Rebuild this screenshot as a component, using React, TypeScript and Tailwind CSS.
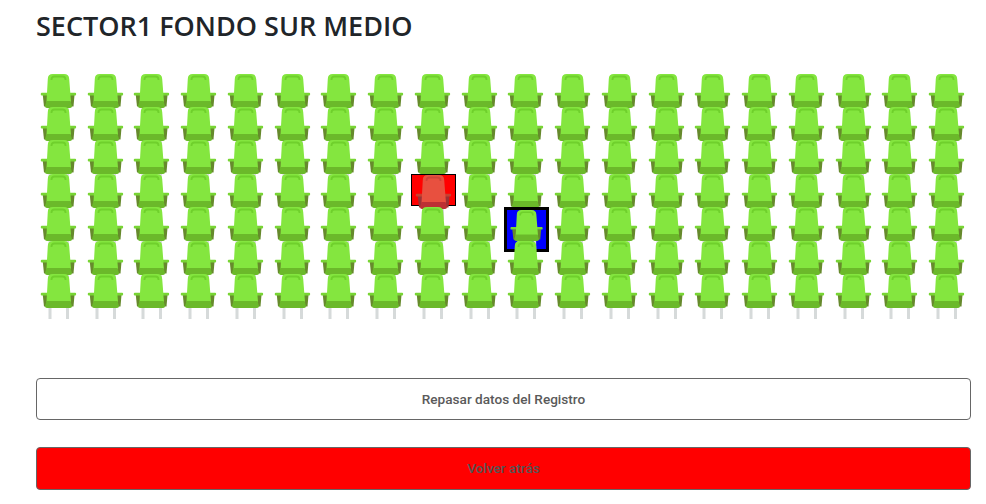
const ROWS = 7;
const COLS = 20;

const green = { back: "#84e63f", trim: "#6fd02c", arm: "#78d534", side: "#668a2c", cushion: "#6bb92a", leg: "#d6dada" };
const red = { back: "#e8503f", trim: "#cf443a", arm: "#c8402f", side: "#9c3234", cushion: "#bd3034", leg: "#d6dada" };

type Palette = typeof green;

function Seat({ colors, size = 45 }: { colors: Palette; size?: number }) {
  return (
    <svg width={size} height={size} viewBox="0 0 45 45" className="shrink-0">
      <rect x="11.500" y="32" width="3" height="13" fill={colors.leg} />
      <rect x="29" y="32" width="3" height="13" fill={colors.leg} />
      <path d="M5.800 21H37.500L36.500 32.500H7Z" fill={colors.side} />
      <rect x="3.800" y="18.700" width="35.300" height="2.800" rx="1" fill={colors.arm} />
      <path d="M10.800 5Q10.800 0 15.800 0H27Q32 0 32.200 5L34 28H9.500Z" fill={colors.back} />
      <path d="M14.500 6V5.500Q14.500 2.500 17.500 2.500H25.500Q28.500 2.500 28.500 5.500V6" fill="none" stroke={colors.trim} strokeWidth="1.800" />
      <path d="M9.500 27H33.500L35 32Q35 34 33 34H10Q8 34 8 32Z" fill={colors.cushion} />
    </svg>
  );
}

function SeatCell({ row, col }: { row: number; col: number }) {
  if (row === 3 && col === 8) {
    return (
      <div className="flex h-[33.4px] justify-center">
        <div className="h-[32px] w-[45px] shrink-0 border border-black bg-[#ff0000]">
          <Seat colors={red} />
        </div>
      </div>
    );
  }
  if (row === 4 && col === 10) {
    return (
      <div className="flex h-[33.4px] justify-center">
        <div className="h-[45px] w-[45px] shrink-0 border-[3px] border-black bg-[#0000ff]">
          <Seat colors={green} size={41} />
        </div>
      </div>
    );
  }
  return (
    <div className="flex h-[33.4px] justify-center">
      <Seat colors={green} />
    </div>
  );
}

export default function App() {
  const cells = [];
  for (let row = 0; row < ROWS; row++) {
    for (let col = 0; col < COLS; col++) {
      cells.push(<SeatCell key={`${row}-${col}`} row={row} col={col} />);
    }
  }

  return (
    <div className="min-h-[504px] bg-white pl-9 pr-[15px] pt-2 font-['Roboto',sans-serif]">
      <h1 className="font-['Open_Sans',sans-serif] text-[27px] font-semibold leading-9 text-[#212529]">
        SECTOR1 FONDO SUR MEDIO
      </h1>

      <div className="mt-[29.6px] grid grid-cols-[repeat(20,minmax(0,1fr))]">{cells}</div>

      <button className="mt-[70.4px] block h-[42px] w-full rounded border border-[#666666] bg-white text-[13.6px] font-medium text-[#5a5a5a]">
        Repasar datos del Registro
      </button>
      <button className="mt-[27px] block h-[43px] w-full rounded border border-[#666666] bg-[#ff0000] text-[13.6px] font-medium text-[#555555]">
        Volver atrás
      </button>
    </div>
  );
}
